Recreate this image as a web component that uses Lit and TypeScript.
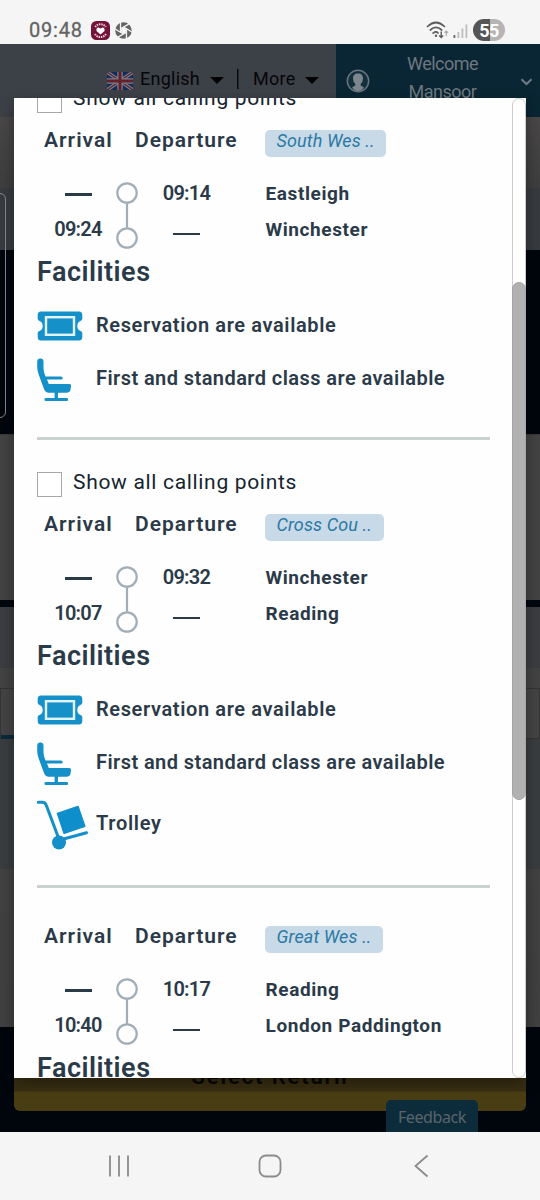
import { LitElement, html, css, svg, nothing } from "lit";
import { customElement, property } from "lit/decorators.js";

interface Leg {
  callingPoints: boolean;
  operator: string;
  from: string;
  to: string;
  departs: string;
  arrives: string;
  facilities: { icon: "ticket" | "seat" | "trolley"; label: string }[];
}

const RESERVATION = { icon: "ticket" as const, label: "Reservation are available" };
const CLASSES = { icon: "seat" as const, label: "First and standard class are available" };

const LEGS: Leg[] = [
  { callingPoints: true, operator: "South Wes ..", from: "Eastleigh", to: "Winchester", departs: "09:14", arrives: "09:24", facilities: [RESERVATION, CLASSES] },
  { callingPoints: true, operator: "Cross Cou ..", from: "Winchester", to: "Reading", departs: "09:32", arrives: "10:07", facilities: [RESERVATION, CLASSES, { icon: "trolley", label: "Trolley" }] },
  { callingPoints: false, operator: "Great Wes ..", from: "Reading", to: "London Paddington", departs: "10:17", arrives: "10:40", facilities: [] },
];

const ICONS = {
  ticket: svg`<svg width="46" height="30" viewBox="0 0 46 30">
    <path fill="#1590c8" d="M4 0.500H42Q45.300 0.500 45.300 4V8Q45 9.600 43 10.200Q40.300 11.500 40.300 15T43 19.800Q45 20.400 45.300 22V26Q45.300 29.500 42 29.500H4Q0.700 29.500 0.700 26V22Q1 20.400 3 19.800Q5.700 18.500 5.700 15T3 10.200Q1 9.600 0.700 8V4Q0.700 0.500 4 0.500Z"/>
    <rect x="9" y="6.200" width="28" height="17.600" fill="#1590c8" stroke="#e4f4fc" stroke-width="2.400"/>
  </svg>`,
  seat: svg`<svg width="46" height="44" viewBox="0 0 46 44">
    <g fill="#1590c8"><path d="M0.200 4Q0.200 0.600 3.400 0.600T6.500 4V10Q6.500 13 7.500 15.500L8.500 18.400H24Q25.700 18.400 25.700 20T24 21.600H10L11.800 26H32Q34.500 26 34.100 28.300L33.400 32Q32.700 34.700 29.500 34.700H12Q8.200 34.700 7 31L1.500 16Q0.200 12 0.200 9Z"/>
    <rect x="17.600" y="33" width="3.400" height="9"/><rect x="7.500" y="40" width="23.500" height="3" rx="1.300"/></g>
  </svg>`,
  trolley: svg`<svg width="52" height="50" viewBox="0 0 52 50">
    <path d="M1.300 2.300H5.200Q8.300 2.300 9.300 5.300L21 36.500" fill="none" stroke="#1590c8" stroke-width="3" stroke-linecap="round"/>
    <path d="M22 40.300L49.500 32.800" stroke="#1590c8" stroke-width="3" stroke-linecap="round"/>
    <circle cx="22" cy="42.500" r="7" fill="#1590c8"/>
    <path d="M20.500 13.500L41 6.500 47.800 26.300 27.200 33.400Z" fill="#0e8fcb" stroke="#0e8fcb" stroke-width="1.500" stroke-linejoin="round"/>
  </svg>`,
};

@customElement("journey-leg")
class JourneyLeg extends LitElement {
  @property({ attribute: false }) leg!: Leg;

  static styles = css`
    :host { display: block; padding: 28px 0 0 23px; color: #2b3a48; font-family: Roboto, sans-serif; font-weight: 600; }
    svg { display: block; }
    .calling { display: flex; align-items: center; height: 25px; gap: 11px; margin: 4px 0 7px; font-size: 21px; font-weight: 400; letter-spacing: 0.680px; color: #15242e; white-space: nowrap; }
    .calling span { padding-bottom: 5px; }
    .box { box-sizing: border-box; width: 25px; height: 25px; border: 1px solid #a9a9a9; background: #fff; }
    .head { display: grid; grid-template-columns: 91px 137px 1fr; height: 54.500px; font-size: 21px; line-height: 40px; letter-spacing: 1px; }
    .arr { padding-left: 7px; }
    .dep { padding-left: 7px; }
    .chip { justify-self: start; box-sizing: border-box; height: 27px; margin-top: 10px; padding: 0 11.500px; border-radius: 5px; background: #c8d9e7; color: #2a7aa5; font-size: 18px; font-style: italic; font-weight: 400; line-height: 22px; letter-spacing: 0.120px; }
    .times { display: grid; grid-template-columns: 82px 16px 103px 27.500px 1fr; grid-template-rows: 36.500px 37px; font-size: 20px; line-height: 37px; letter-spacing: -0.700px; }
    .track { grid-column: 2; grid-row: 1 / 3; justify-self: center; padding-top: 6px; }
    .c { text-align: center; }
    .dash { width: 27px; height: 2.500px; background: #2b3a48; justify-self: center; align-self: center; }
    .d1 { margin-top: 3px; } .d2 { margin-top: 9px; }
    .place { grid-column: 5; font-size: 19px; font-weight: 700; letter-spacing: 0.600px; }
    h3 { margin: 0; height: 53px; line-height: 48px; font-size: 27px; font-weight: 600; letter-spacing: 0.500px; }
    .fac { display: flex; align-items: center; font-size: 20px; white-space: nowrap; }
    .ico { width: 59px; flex: none; }
    .ticket { height: 50px; letter-spacing: 0.620px; } .seat { height: 58px; letter-spacing: 0.430px; } .trolley { height: 64px; letter-spacing: 0.700px; }
    .ticket .lbl { padding-bottom: 2px; } .seat .lbl { padding-bottom: 5px; } .trolley .lbl { padding-bottom: 5px; }
    hr { width: 453px; height: 3px; margin: 28px 0 0 -0.500px; border: 0; background: #c9d2d1; }
  `;

  render() {
    const l = this.leg;
    return html`
      ${l.callingPoints ? html`<div class="calling"><div class="box"></div><span>Show all calling points</span></div>` : nothing}
      <div class="head"><div class="arr">Arrival</div><div class="dep">Departure</div><div class="chip">${l.operator}</div></div>
      <div class="times">
        <div class="dash d1"></div>
        <svg class="track" width="24" height="68" viewBox="0 0 24 68"><g fill="none" stroke="#a1aeb7" stroke-width="2.200">
          <path d="M12 22V47"/><circle cx="12" cy="12" r="9.700"/><circle cx="12" cy="57" r="9.700"/></g></svg>
        <div class="c">${l.departs}</div>
        <div class="place">${l.from}</div>
        <div class="c">${l.arrives}</div>
        <div class="dash d2"></div>
        <div class="place">${l.to}</div>
      </div>
      <h3>Facilities</h3>
      ${l.facilities.map((f) => html`<div class="fac ${f.icon}"><div class="ico">${ICONS[f.icon]}</div><div class="lbl">${f.label}</div></div>`)}
      ${l.facilities.length ? html`<hr />` : nothing}
    `;
  }
}

@customElement("app-root")
class AppRoot extends LitElement {
  static styles = css`
    :host { display: block; width: 540px; height: 1200px; overflow: hidden; background: #f5f5f5; font-family: Roboto, sans-serif; }
    * { box-sizing: border-box; }
    svg { display: block; flex: none; }
    .status { display: flex; align-items: center; height: 44px; padding: 16px 35px 0 29px; color: #636363; }
    .clock { font-size: 20px; letter-spacing: 0.800px; width: 62px; -webkit-text-stroke: 0.300px #636363; }
    .gap { width: 5px; }
    .grow { flex: 1; }
    .battery { display: flex; align-items: center; justify-content: center; margin-left: 5px; width: 32px; height: 22px; border-radius: 11px; background: linear-gradient(90deg, #555 0 54%, #b5b5b5 54%); color: #fff; font-size: 18px; font-weight: 700; letter-spacing: -0.500px; }

    .screen { position: relative; height: 1088px; overflow: hidden; background: #444; }
    .top { display: flex; height: 73px; background: #3c4047; }
    .lang { display: flex; align-items: center; width: 336px; height: 68px; padding-left: 107px; font-size: 18px; color: #060607; letter-spacing: 0.250px; }
    .flag { margin: 5px 7px 0 0; }
    .caret { width: 0; border: 7px solid transparent; border-top-color: #020202; border-bottom: 0; margin: 5px 0 0 10px; }
    .bar-sep { margin: 2px 14px 0 13px; }
    .user { display: flex; flex: 1; height: 73px; padding: 6px 7px 0 10px; background: #0a2533; color: #6d7880; }
    .user .who { width: 71px; margin-left: 37px; text-align: center; font-size: 18px; line-height: 28px; letter-spacing: -0.500px; }
    .avatar { margin-top: 19px; }
    .chev { margin-top: 28px; }
    .b-a { height: 71px; background: linear-gradient(#494747, #3e3e3e); }
    .b-b { height: 62px; background: #373b40; }
    .b-c { height: 184px; background: #01060d; }
    .b-d { height: 166px; background: #434343; border-top: 1px solid #383838; }
    .b-e { height: 7px; background: #01070f; }
    .b-f { height: 61px; background: #3b3d40; }
    .b-g { height: 20px; background: #434343; }
    .b-h { display: flex; justify-content: space-between; height: 51px; border: 1px solid #353535; background: #444; }
    .b-h i { width: 13px; height: 4px; margin-top: 46px; background: #0a2b3d; }
    .b-i { height: 130px; background: #3a3d40; }
    .b-j { height: 158px; background: linear-gradient(#434242, #404040); }
    .b-k { height: 106px; padding: 0 14px; background: #01060d; border-bottom: 1px solid #777; }
    .select { height: 84px; padding-top: 34px; border-radius: 0 0 6px 6px; background: linear-gradient(#3a2f13 0 64px, #493e13 65px); color: #070704; text-align: center; font-size: 22px; line-height: 32px; font-weight: 600; letter-spacing: 1.850px; }
    .outline { position: absolute; left: -20px; top: 149px; width: 26px; height: 225px; border: 1px solid #85898c; border-radius: 6px; }
    .feedback { position: absolute; left: 386px; top: 1056px; width: 92px; height: 32px; border-radius: 5px 5px 0 0; background: #0d2c3b; color: #59656b; text-align: center; font: 16px/35px "Noto Sans", sans-serif; letter-spacing: -0.400px; }

    .modal { position: absolute; left: 14px; top: 54px; display: flex; width: 512px; height: 980px; overflow: hidden; background: #fefefe; box-shadow: 0 6px 14px rgba(0, 0, 0, 0.35); }
    .content { width: 498px; height: 980px; overflow: hidden; }
    .legs { margin-top: -42px; }
    .bar { width: 14px; height: 980px; border: 1px solid #ccc; border-radius: 7px; background: #fff; }
    .thumb { width: 14px; height: 518px; margin: 183px 0 0 -1px; border-radius: 7px; background: #b1b1b1; border: 1px solid #a5a5a5; }

    .nav { display: flex; align-items: center; height: 68px; padding-left: 108px; }
    .home { margin-left: 128px; } .back { margin-left: 131px; }
  `;

  render() {
    return html`
      <div class="status">
        <div class="clock">09:48</div>
        <svg width="19" height="19" viewBox="0 0 19 19"><rect width="19" height="19" rx="5.500" fill="#741237"/>
          <g fill="none" stroke="#e6cfd5" stroke-width="2" stroke-dasharray="1.500 .8"><path d="M4.200 6A6.400 6.400 0 0 1 14.800 6"/><path d="M4 13A6.400 6.400 0 0 0 15 13"/></g>
          <path fill="#fff" d="M9.500 13.500L5.500 10Q5 7 7.500 6.600L9.500 7.500 11.500 6.600Q14 7 13.500 10Z"/></svg>
        <div class="gap"></div>
        <svg width="17" height="17" viewBox="0 0 17 17"><circle cx="8.500" cy="8.500" r="8.300" fill="#646464"/>
          <g stroke="#f5f5f5" stroke-width="1.300">${[0, 60, 120, 180, 240, 300].map((a) => svg`<path d="M5.500 6.800L14.500 1.600" transform="rotate(${a} 8.500 8.500)"/>`)}</g><path fill="#f5f5f5" d="M7 5.900H10L11.500 8.500 10 11.100H7L5.500 8.500Z"/></svg>
        <div class="grow"></div>
        <svg width="42" height="20" viewBox="0 0 42 20"><g fill="none" stroke="#5c5c5c" stroke-width="1.700" stroke-linecap="round"><path d="M1.500 6.500Q10 -1.500 18.500 6.500"/><path d="M4.300 10Q10 4.800 15.700 10"/><path d="M7.100 13.200Q10 10.800 12 13"/></g>
          <circle cx="10" cy="15.800" r="1.200" fill="#5c5c5c"/><path d="M15.200 11.500V17.500M13.200 15.500L15.200 17.600 17.200 15.500" fill="none" stroke="#5c5c5c" stroke-width="1.400"/><path d="M20.300 16V11M18.500 12.700L20.300 11 22.100 12.700" fill="none" stroke="#aaa" stroke-width="1.200"/>
          <rect x="27.500" y="15" width="1.800" height="3" fill="#666"/><g fill="#bdbdbd"><rect x="31.500" y="12" width="1.800" height="6"/><rect x="35.500" y="8.500" width="1.800" height="9.500"/><rect x="39.500" y="4.500" width="1.800" height="13.500"/></g></svg>
        <div class="battery">55</div>
      </div>
      <div class="screen">
        <div class="top">
          <div class="lang">
            <svg class="flag" width="26" height="18" viewBox="0 0 26 18"><rect width="26" height="18" fill="#142b59"/>
              <path d="M0 0L26 18M26 0L0 18" stroke="#777d89" stroke-width="3.500"/><path d="M0 0L26 18M26 0L0 18" stroke="#64202b" stroke-width="1.200"/>
              <path d="M13 0V18M0 9H26" stroke="#777d89" stroke-width="5.500"/><path d="M13 0V18M0 9H26" stroke="#64202b" stroke-width="3"/></svg>
            <span>English</span><div class="caret"></div>
            <svg class="bar-sep" width="2" height="20"><rect width="1.500" height="20" fill="#08090a"/></svg>
            <span>More</span><div class="caret"></div>
          </div>
          <div class="user">
            <svg class="avatar" width="24" height="24" viewBox="0 0 24 24"><circle cx="12" cy="12" r="10.700" fill="#14303d" stroke="#68757d" stroke-width="1.500"/>
              <path fill="#7d878d" d="M12 4.500C15.500 4.500 17 6.500 17 9.500Q17 13 14.700 14.800V16.500L18 18.500Q15.500 22 12 22T6 18.500L9.300 16.500V14.800Q7 13 7 9.500C7 6.500 8.500 4.500 12 4.500Z"/></svg>
            <div class="who">Welcome Mansoor</div>
            <div class="grow"></div>
            <svg class="chev" width="13" height="8" viewBox="0 0 13 8"><path d="M1.500 1.200L6.500 6 11.500 1.200" fill="none" stroke="#6d7c85" stroke-width="2"/></svg>
          </div>
        </div>
        <div class="b-a"></div><div class="b-b"></div><div class="b-c"></div><div class="b-d"></div><div class="b-e"></div>
        <div class="b-f"></div><div class="b-g"></div><div class="b-h"><i></i></div><div class="b-i"></div><div class="b-j"></div>
        <div class="b-k"><div class="select">Select Return</div></div>
        <div class="outline"></div>
        <div class="feedback">Feedback</div>
        <div class="modal">
          <div class="content"><div class="legs">${LEGS.map((l) => html`<journey-leg .leg=${l}></journey-leg>`)}</div></div>
          <div class="bar"><div class="thumb"></div></div>
        </div>
      </div>
      <div class="nav">
        <svg width="22" height="22" viewBox="0 0 22 22"><path d="M2 0.500V21.500M11 0.500V21.500M20 0.500V21.500" stroke="#8b8b8b" stroke-width="1.800"/></svg>
        <svg class="home" width="24" height="24" viewBox="0 0 24 24"><rect x="1.500" y="1.500" width="21" height="21" rx="6.500" fill="none" stroke="#8b8b8b" stroke-width="1.800"/></svg>
        <svg class="back" width="16" height="24" viewBox="0 0 16 24"><path d="M14.500 1.500L2.500 12 14.500 22.500" fill="none" stroke="#8b8b8b" stroke-width="1.800"/></svg>
      </div>
    `;
  }
}
